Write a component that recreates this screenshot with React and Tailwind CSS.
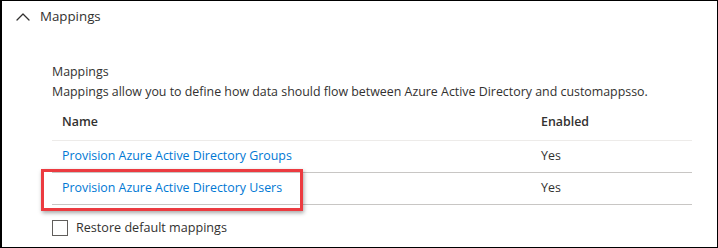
import { ChevronUp } from "lucide-react";

const rows = [
  { name: "Provision Azure Active Directory Groups", enabled: "Yes" },
  { name: "Provision Azure Active Directory Users", enabled: "Yes", marked: true },
];

export default function App() {
  return (
    <div
      className="relative h-[248px] w-[718px] overflow-hidden border-t border-b border-r border-l-2 border-black bg-white text-[12.4px] text-[#323130]"
      style={{ fontFamily: '"Open Sans", "Noto Sans", sans-serif' }}
    >
      <div className="flex h-[32px] items-center gap-[5px] pl-[9px]">
        <ChevronUp className="h-[24px] w-[24px] text-[#323130]" strokeWidth={1.3} />
        <span className="text-[13.3px] text-[#323130]">Mappings</span>
      </div>

      <div className="pl-[50px] pr-[25px] pt-[30px]">
        <p className="leading-[18px]">Mappings</p>
        <p className="mt-[2px] leading-[18px]">
          Mappings allow you to define how data should flow between Azure Active Directory and customappsso.
        </p>

        <div className="mt-[4px]">
          <div className="flex h-[36px] items-center border-b border-[#edebe9] pl-[10px] font-semibold">
            <span className="w-[479px]">Name</span>
            <span>Enabled</span>
          </div>
          {rows.map((r) => (
            <div
              key={r.name}
              className="relative flex h-[32px] items-center border-b border-[#c8c6c4] pl-[10px]"
            >
              <span className="w-[479px] text-[#0078d4]">{r.name}</span>
              <span>{r.enabled}</span>
              {r.marked && (
                <div className="pointer-events-none absolute left-[-11px] top-[-4px] h-[42px] w-[262px] border-[3px] border-[#ec3b40] shadow-[1px_2px_4px_rgba(0,0,0,0.35)]" />
              )}
            </div>
          ))}
        </div>

        <label className="mt-[14px] flex items-center gap-[8px]">
          <span className="h-[16px] w-[16px] border border-[#605e5c] bg-white" />
          <span className="text-[12.6px]">Restore default mappings</span>
        </label>
      </div>
    </div>
  );
}
